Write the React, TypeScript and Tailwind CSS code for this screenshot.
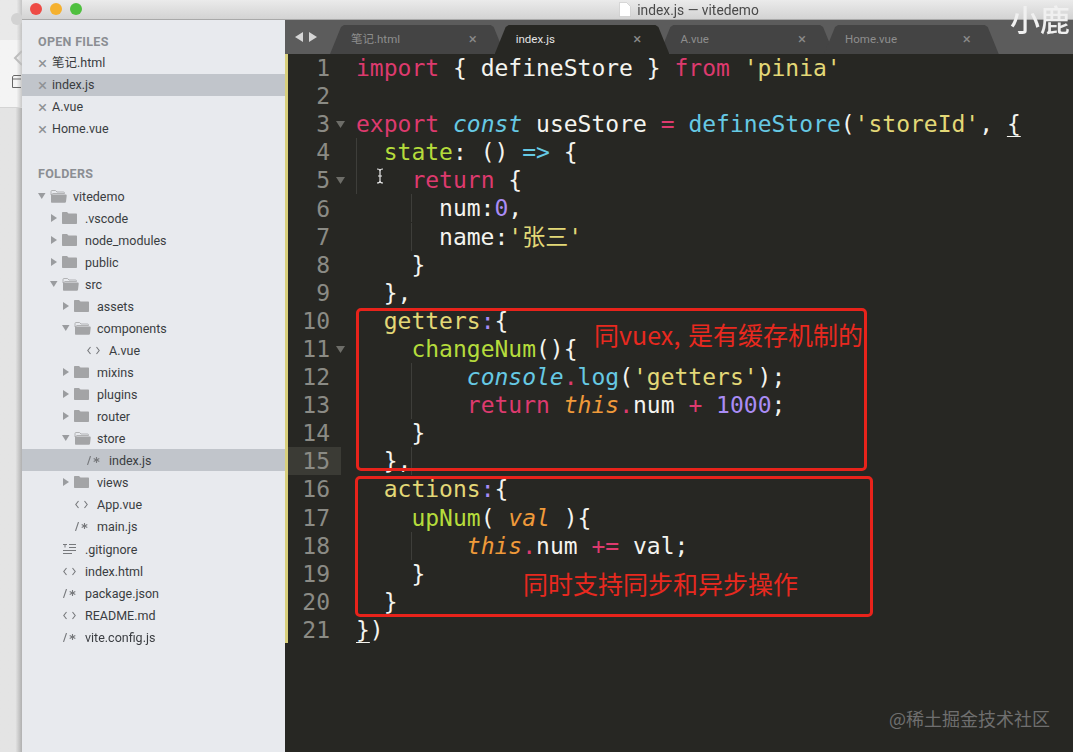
import { Fragment } from "react";

type Token = [string, string?];

const P = "text-[#dd3a6e]";
const Y = "text-[#e3d877]";
const C = "text-[#66c9e4]";
const CI = "text-[#66c9e4] italic";
const G = "text-[#b5dc3c]";
const O = "text-[#ef9a3a] italic";
const N = "text-[#a98cf5]";

const codeLines: { tokens: Token[]; fold?: boolean; guide?: string }[] = [
  { tokens: [["import", P], [" { defineStore } "], ["from", P], [" "], ["'pinia'", Y]] },
  { tokens: [] },
  {
    fold: true,
    tokens: [["export", P], [" "], ["const", CI], [" useStore "], ["=", P], [" "], ["defineStore", C], ["("], ["'storeId'", Y], [", "], ["{", "underline underline-offset-4 decoration-1"]],
  },
  { guide: "left-0", tokens: [["  "], ["state", G], [": () "], ["=>", C], [" {"]] },
  { fold: true, guide: "left-0", tokens: [["    "], ["return", P], [" {"]] },
  { guide: "left-[55px]", tokens: [["      num:"], ["0", N], [","]] },
  { guide: "left-[55px]", tokens: [["      name:"], ["'张三'", Y]] },
  { tokens: [["    }"]] },
  { tokens: [["  },"]] },
  { tokens: [["  "], ["getters", Y], [":", N], ["{"]] },
  { fold: true, tokens: [["    "], ["changeNum", G], ["(){"]] },
  { guide: "left-[55px]", tokens: [["        "], ["console", CI], [".", P], ["log", C], ["("], ["'getters'", Y], [");"]] },
  { guide: "left-[55px]", tokens: [["        "], ["return", P], [" "], ["this", O], [".", P], ["num "], ["+", P], [" "], ["1000", N], [";"]] },
  { tokens: [["    }"]] },
  { guide: "left-[55px]", tokens: [["  },"]] },
  { tokens: [["  "], ["actions", Y], [":", N], ["{"]] },
  { tokens: [["    "], ["upNum", G], ["( "], ["val", O], [" ){"]] },
  { guide: "left-[55px]", tokens: [["        "], ["this", O], [".", P], ["num "], ["+=", P], [" val;"]] },
  { tokens: [["    }"]] },
  { tokens: [["  }"]] },
  { tokens: [["}", "underline underline-offset-4 decoration-1"], [")"]] },
];

const INDENT = ["pl-[16px]", "pl-[28px]", "pl-[40px]", "pl-[52px]"];

const tree: { name: string; depth: number; kind: "closed" | "open" | "tag" | "js" | "text"; active?: boolean }[] = [
  { name: "vitedemo", depth: 0, kind: "open" },
  { name: ".vscode", depth: 1, kind: "closed" },
  { name: "node_modules", depth: 1, kind: "closed" },
  { name: "public", depth: 1, kind: "closed" },
  { name: "src", depth: 1, kind: "open" },
  { name: "assets", depth: 2, kind: "closed" },
  { name: "components", depth: 2, kind: "open" },
  { name: "A.vue", depth: 3, kind: "tag" },
  { name: "mixins", depth: 2, kind: "closed" },
  { name: "plugins", depth: 2, kind: "closed" },
  { name: "router", depth: 2, kind: "closed" },
  { name: "store", depth: 2, kind: "open" },
  { name: "index.js", depth: 3, kind: "js", active: true },
  { name: "views", depth: 2, kind: "closed" },
  { name: "App.vue", depth: 2, kind: "tag" },
  { name: "main.js", depth: 2, kind: "js" },
  { name: ".gitignore", depth: 1, kind: "text" },
  { name: "index.html", depth: 1, kind: "tag" },
  { name: "package.json", depth: 1, kind: "js" },
  { name: "README.md", depth: 1, kind: "tag" },
  { name: "vite.config.js", depth: 1, kind: "js" },
];

const tabs = [
  { name: "笔记.html", active: false },
  { name: "index.js", active: true },
  { name: "A.vue", active: false },
  { name: "Home.vue", active: false },
];

function Arrow({ open }: { open: boolean }) {
  return (
    <svg width="8" height="8" viewBox="0 0 8 8" className="fill-[#9a9c9f]">
      {open ? <path d="M0 1h7.5L3.75 7z" /> : <path d="M1 0v8l6-4z" />}
    </svg>
  );
}

function FolderIcon({ open }: { open: boolean }) {
  return open ? (
    <svg width="17" height="13" viewBox="0 0 17 13" className="fill-[#a3a4a6]">
      <path d="M1 1.500C1 .8 1.500.5 2 .5h3.500l1.500 1.500h6.500c.6 0 1 .4 1 1v.5H3L1 5z" fill="none" stroke="#a3a4a6" strokeWidth=".8" />
      <path d="M1 5.500c0-.6.4-1 1-1h13.500c.8 0 1.300.4 1.200 1.200l-.7 6c-.1.7-.5 1-1.200 1H2c-.6 0-1-.4-1-1z" />
    </svg>
  ) : (
    <svg width="15" height="12" viewBox="0 0 15 12" className="fill-[#a3a4a6]">
      <path d="M0 1c0-.6.4-1 1-1h4l1.500 1.500H14c.6 0 1 .4 1 1V11c0 .6-.4 1-1 1H1c-.6 0-1-.4-1-1z" />
    </svg>
  );
}

function FileGlyph({ kind }: { kind: "tag" | "js" | "text" }) {
  if (kind === "text") {
    return (
      <svg width="14" height="11" viewBox="0 0 14 11" stroke="#77797c" strokeWidth="1" fill="none">
        <path d="M0 .5h4M2 .5v3M6 .5h7M6 3.500h7M0 6.500h13M0 9.500h9" />
      </svg>
    );
  }
  return (
    <svg width="13" height="9" viewBox="0 0 13 9" stroke="#77797c" strokeWidth="1.100" fill="none">
      {kind === "tag" ? (
        <path d="M3.500 1 .8 4.500l2.700 3.500M9.500 1l2.700 3.500L9.500 8" />
      ) : (
        <path d="M3.500 0 .5 9M9.500 1v6M6.700 2.600l5.600 2.800M12.300 2.600 6.700 5.400" />
      )}
    </svg>
  );
}

function SectionTitle({ children, className }: { children: string; className?: string }) {
  return (
    <div className={`h-[22px] pl-[16px] pt-[2px] flex items-center text-[12.5px] font-bold tracking-[0.3px] text-[#8b8e93] ${className ?? ""}`}>
      {children}
    </div>
  );
}

function Sidebar() {
  return (
    <aside className="w-[263px] shrink-0 bg-[#e8eaee] pt-[10px] text-[12.5px] text-[#3a3d41]">
      <SectionTitle>OPEN FILES</SectionTitle>
      {tabs.map((tab) => (
        <div key={tab.name} className={`h-[22px] pl-[16px] flex items-center ${tab.active ? "bg-[#c1c5cb]" : ""}`}>
          <span className="w-[14px] text-[17px] leading-none text-[#8f9195]">×</span>
          <span>{tab.name}</span>
        </div>
      ))}
      <SectionTitle className="mt-[22px] mb-px">FOLDERS</SectionTitle>
      {tree.map((row) => {
        const isFolder = row.kind === "open" || row.kind === "closed";
        return (
          <div
            key={row.depth + row.name}
            className={`h-[22px] flex items-center ${INDENT[row.depth]} ${row.active ? "bg-[#c1c5cb]" : ""} ${row.name === ".gitignore" ? "mt-px" : ""}`}
          >
            <span className="w-[12px] flex items-center">{isFolder && <Arrow open={row.kind === "open"} />}</span>
            <span className="w-[23px] flex items-center">
              {row.kind === "open" || row.kind === "closed" ? (
                <FolderIcon open={row.kind === "open"} />
              ) : (
                <span className="pl-[1px]">
                  <FileGlyph kind={row.kind} />
                </span>
              )}
            </span>
            <span className="pt-[2px]">{row.name}</span>
          </div>
        );
      })}
    </aside>
  );
}

function TabBar() {
  return (
    <div className="h-[34px] bg-[#5c5c5c] flex items-end pl-[45px] shrink-0">
      <div className="w-[45px] self-center flex items-center -ml-[35px] mr-[-10px]">
        <svg width="22" height="10" viewBox="0 0 22 10" className="fill-[#d5d5d5]">
          <path d="M8 0v10L0 5zM14 0v10l8-5z" />
        </svg>
      </div>
      {tabs.map((tab) => (
        <div
          key={tab.name}
          className={`w-[174.7px] h-[29px] -mr-[10px] pl-[21px] pr-[28px] flex items-center justify-between text-[11.5px] [clip-path:polygon(0_100%,11px_2px,14px_0,calc(100%-14px)_0,calc(100%-11px)_2px,100%_100%)] ${
            tab.active ? "bg-[#272723] text-[#e4e4e4] relative z-10" : "bg-[#444444] text-[#8e8e8e]"
          }`}
        >
          <span>{tab.name}</span>
          <span className="text-[15px] leading-none text-[#8a8a8a]">×</span>
        </div>
      ))}
    </div>
  );
}

function Code() {
  return (
    <div className="relative flex-1 bg-[#272723] flex items-start font-['DejaVu_Sans_Mono','Noto_Sans_CJK_SC',monospace] text-[23px] leading-[28px] text-[#f4f4ef]">
      <div className="w-[3px] h-[589px] bg-[#d8cf7c] shrink-0" />
      <div className="w-[53px] shrink-0">
        {codeLines.map((line, i) => (
          <div key={i} className={`h-[28.1px] flex items-center justify-end relative pr-[11px] text-[#8b8b85] ${i === 14 ? "bg-[#3b3b35]" : ""}`}>
            {i + 1}
            {line.fold && (
              <svg width="9" height="7" viewBox="0 0 9 7" className="absolute right-[-4px] top-[11px] fill-[#6d6d68]">
                <path d="M0 0h9L4.500 7z" />
              </svg>
            )}
          </div>
        ))}
      </div>
      <div className="ml-[15px] flex-1">
        {codeLines.map((line, i) => (
          <div key={i} className="h-[28.1px] whitespace-pre relative">
            {line.guide && <span className={`absolute top-0 h-[28px] w-px bg-[#3e3e3a] ${line.guide}`} />}
            {line.tokens.map(([text, cls], j) => (
              <Fragment key={j}>{cls ? <span className={cls}>{text}</span> : text}</Fragment>
            ))}
          </div>
        ))}
      </div>

      {/* mouse cursor */}
      <svg width="8" height="16" viewBox="0 0 8 16" className="absolute left-[91px] top-[114px]" stroke="#e8e8e8" strokeWidth="1.200" fill="none">
        <path d="M1 1c2 0 3 .5 3 2v10c0 1.500-1 2-3 2M7 1C5 1 4 1.500 4 3M7 15c-2 0-3-.5-3-2M2 8h4" />
      </svg>

      {/* red annotations */}
      <div className="absolute left-[71px] top-[254px] w-[511px] h-[163px] border-[3px] border-[#e8231b] rounded-[5px]" />
      <div className="absolute left-[70px] top-[422px] w-[518px] h-[141px] border-[3px] border-[#e8231b] rounded-[5px]" />
      <div className="absolute left-[309px] top-[264px] font-['Noto_Sans_CJK_SC',sans-serif] text-[25px] leading-[32px] text-[#e8291f] [word-spacing:2px] whitespace-nowrap">
        同vuex, 是有缓存机制的
      </div>
      <div className="absolute left-[238px] top-[513px] font-['Noto_Sans_CJK_SC',sans-serif] text-[25px] leading-[32px] text-[#e8291f] whitespace-nowrap">
        同时支持同步和异步操作
      </div>

      {/* watermark */}
      <div className="absolute left-[604px] top-[652px] font-['Noto_Sans_CJK_SC',sans-serif] text-[18px] leading-[24px] text-[#6f6f6f] whitespace-nowrap">
        @稀土掘金技术社区
      </div>
    </div>
  );
}

export default function App() {
  return (
    <div className="relative w-[1073px] h-[752px] overflow-hidden flex blur-[0.4px] font-['Roboto','Noto_Sans_CJK_SC',sans-serif]">
      {/* strip of the browser window behind */}
      <div className="w-[22px] shrink-0 flex flex-col">
        <div className="h-[40px] bg-gradient-to-r from-[#e9e9e9] from-75% to-[#c4c4c4] pt-[13px] pl-[11px]">
          <div className="w-[12px] h-[12px] rounded-full bg-[#d2d2d2]" />
        </div>
        <div className="h-[68px] bg-gradient-to-r from-[#f4f4f4] from-75% to-[#c9c9c9] border-b border-[#d4d4d4] pt-[10px] pl-[13px]">
          <svg width="9" height="16" viewBox="0 0 9 16" fill="none" stroke="#bdbdbd" strokeWidth="2" className="block">
            <path d="M9 1 2 8l7 7" />
          </svg>
          <svg width="9" height="13" viewBox="0 0 9 13" fill="none" stroke="#666" strokeWidth="1" className="block mt-[9px] -ml-px">
            <path d="M9 .5H1.500L.5 2v10.500H9M.5 4H9" />
          </svg>
        </div>
        <div className="flex-1 bg-gradient-to-r from-[#e4e4e4] from-70% to-[#b0b0b0]" />
      </div>

      <div className="flex-1 flex flex-col min-w-0">
        <header className="relative h-[20px] shrink-0 bg-gradient-to-b from-[#ebebeb] to-[#d3d3d3] border-b border-[#a9a9a9] flex items-center justify-center pt-[2px] text-[13.8px] text-[#4a4a4a]">
          <div className="absolute left-[8px] top-[3px] flex gap-[8px]">
            <span className="w-[12px] h-[12px] rounded-full bg-[#ee4b45]" />
            <span className="w-[12px] h-[12px] rounded-full bg-[#f5b12e]" />
            <span className="w-[12px] h-[12px] rounded-full bg-[#4fc03f]" />
          </div>
          <div className="flex items-center gap-[6px] ml-[283px]">
            <svg width="12" height="15" viewBox="0 0 12 15" className="fill-white stroke-[#bbb] -mt-[2px]" strokeWidth=".5">
              <path d="M.5.500h7l4 4v10h-11z" />
            </svg>
            <span>index.js — vitedemo</span>
          </div>
        </header>
        <div className="flex-1 flex min-h-0">
          <Sidebar />
          <main className="flex-1 flex flex-col min-w-0">
            <TabBar />
            <Code />
          </main>
        </div>
      </div>

      {/* video watermark */}
      <div className="absolute left-[1010px] top-0 font-['Noto_Sans_CJK_SC',sans-serif] font-medium text-[30px] leading-[36px] text-[#f0f0f0] whitespace-nowrap">
        小鹿
      </div>
    </div>
  );
}
